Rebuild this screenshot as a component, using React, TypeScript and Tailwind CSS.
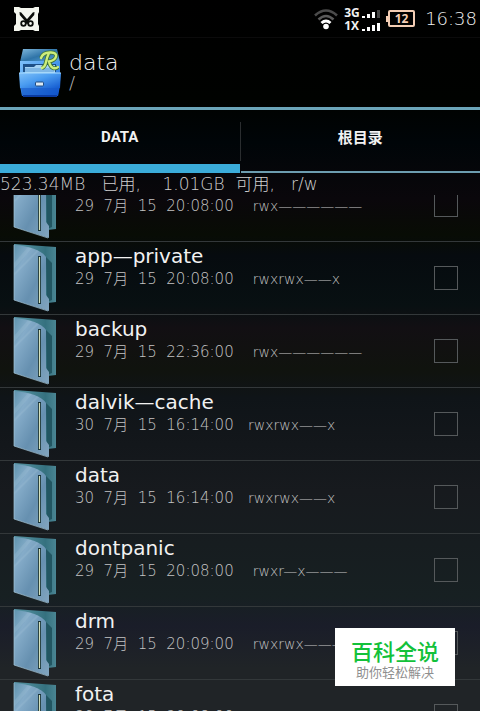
import type { ReactNode } from 'react';

const files = [
  { name: '', date: '29  7月  15  20:08:00    ', perms: 'rwx——————' },
  { name: 'app—private', date: '29  7月  15  20:08:00    ', perms: 'rwxrwx——x' },
  { name: 'backup', date: '29  7月  15  22:36:00    ', perms: 'rwx——————' },
  { name: 'dalvik—cache', date: '30  7月  15  16:14:00   ', perms: 'rwxrwx——x' },
  { name: 'data', date: '30  7月  15  16:14:00   ', perms: 'rwxrwx——x' },
  { name: 'dontpanic', date: '29  7月  15  20:08:00    ', perms: 'rwxr—x———' },
  { name: 'drm', date: '29  7月  15  20:09:00    ', perms: 'rwxrwx———' },
  { name: 'fota', date: '29  7月  15  20:08:00    ', perms: 'rwxrwx——x' },
];

function ScissorsBadge() {
  return (
    <svg className="w-[26px] h-[26px]" viewBox="0 0 26 26" aria-hidden="true">
      <path d="M0 1h5l2 1h12l2-1h4v5l-1 2v10l1 2v5h-4l-2-1H7l-2 1H0v-5l2-2V8L0 6z" fill="#f4f6ee" />
      <path d="M5.500 6q2 0 3 2l7 8-2 2-6-7Q5 9 5.500 6z" fill="#0b0d09" />
      <path d="M20.500 6q-2 0-3 2l-7 8 2 2 6-7q2.500-2 2-5z" fill="#0b0d09" />
      <circle cx="9.500" cy="17.500" r="2.300" fill="none" stroke="#0b0d09" strokeWidth="1.800" />
      <circle cx="16.500" cy="17.500" r="2.300" fill="none" stroke="#0b0d09" strokeWidth="1.800" />
    </svg>
  );
}

function Wifi() {
  return (
    <svg className="w-6 h-[22px]" viewBox="0 0 24 22" fill="none" aria-hidden="true">
      <path d="M1 7.500Q12-2.500 23 7.500" stroke="#4b4b4b" strokeWidth="2.600" />
      <path d="M4.500 11.500Q12 4.500 19.500 11.500" stroke="#5a5a5a" strokeWidth="2.600" />
      <path d="M7.500 15Q12 11 16.500 15" stroke="#fff" strokeWidth="3" />
      <circle cx="12" cy="18.500" r="2.800" fill="#fff" />
    </svg>
  );
}

function SignalRow({ label, last }: { label: string; last: string }) {
  return (
    <div className="flex items-end gap-[2px]">
      <span className="w-4 text-[12px] leading-[13px] font-bold">{label}</span>
      <svg className="w-[18px] h-[11px]" viewBox="0 0 18 11" fill="#fff" aria-hidden="true">
        <path d="M0 8h3v2H0zM5 6h3v4H5zM10 4h3v6h-3z" />
        <path d="M15 2h3v8h-3z" fill={last} />
      </svg>
    </div>
  );
}

function Battery() {
  return (
    <div className="flex items-center text-[#f3cdb4]">
      <span className="w-[2px] h-[6px] bg-[#f3cdb4]" />
      <span className="w-[27px] h-[17px] rounded-xs border-2 border-[#f3cdb4] text-center text-[12px] leading-[13px] font-bold">
        12
      </span>
    </div>
  );
}

function Cabinet() {
  return (
    <svg className="w-[42px] h-[50px] shrink-0" viewBox="0 0 42 50" aria-hidden="true">
      <defs>
        <linearGradient id="cabinetFront" x1="0" y1="0" x2="1" y2="1">
          <stop offset="0" stopColor="#7fc0f8" />
          <stop offset=".45" stopColor="#4a9cf0" />
          <stop offset="1" stopColor="#1158cf" />
        </linearGradient>
        <linearGradient id="cabinetTop" x1="0" y1="0" x2="1" y2="1">
          <stop offset="0" stopColor="#7fb8dc" />
          <stop offset=".5" stopColor="#2f74a8" />
          <stop offset="1" stopColor="#5eaae0" />
        </linearGradient>
      </defs>
      <path d="M4 1h34l3 13H1z" fill="url(#cabinetTop)" />
      <path d="M1 13h40v25l-2 10H3L1 38z" fill="url(#cabinetFront)" />
      <path d="M4 16h33v8H4z" fill="#1d4f86" />
      <path d="M6 19h9l2-2h19v8H6z" fill="#a5d3f4" />
      <path d="M6 21h29M6 23h29" stroke="#5a9bd6" />
      <path d="M0 25h42l-1 15H1z" fill="url(#cabinetFront)" />
      <path d="M0 25h42" stroke="#a8dcff" />
      <path d="M2 40h38l-1 8H3z" fill="#0f50c4" opacity=".6" />
      <path d="M4 48h34" stroke="#0a3aa0" strokeWidth="2" />
      <rect x="16.500" y="34" width="8" height="4" rx="1" fill="#dceaf4" stroke="#214c81" />
      <path
        d="M22 10q2-6 10-5.500 6 .5 5 4-1 4-7 5 1 5 4 6.500 3 1 5-1M30 5q-2 4-3 9-1 5-4 6"
        fill="none"
        stroke="#3f7436"
        strokeWidth="4"
      />
      <path
        d="M22 10q2-6 10-5.500 6 .5 5 4-1 4-7 5 1 5 4 6.500 3 1 5-1M30 5q-2 4-3 9-1 5-4 6"
        fill="none"
        stroke="#cdee7c"
        strokeWidth="2.400"
        strokeLinecap="round"
      />
    </svg>
  );
}

function Folder() {
  return (
    <svg className="w-[50px] h-[70px] shrink-0" viewBox="0 0 50 70" aria-hidden="true">
      <defs>
        <linearGradient id="folderFront" x1="0" y1="0" x2="1" y2="1">
          <stop offset="0" stopColor="#5f93ad" />
          <stop offset=".25" stopColor="#85acc9" />
          <stop offset=".6" stopColor="#6690b0" />
          <stop offset="1" stopColor="#82a5bf" />
        </linearGradient>
        <linearGradient id="folderBack" x1="0" y1="0" x2="1" y2="0">
          <stop offset="0" stopColor="#5b98a8" />
          <stop offset=".75" stopColor="#35717f" />
          <stop offset="1" stopColor="#4a8593" />
        </linearGradient>
      </defs>
      <path d="M1 1l42 3v55l-8 1L1 50z" fill="url(#folderBack)" />
      <path d="M33 14l6 6v37l-5 2z" fill="#225662" />
      <path d="M1 2q25 2 32 12v38l3 4v12L1 57z" fill="url(#folderFront)" />
      <path d="M1 20L15 4l4 1L1 26zM1 30L24 7l2 1L1 33z" fill="#a4c3d6" opacity=".25" />
      <path d="M1 2v55l34 11" fill="none" stroke="#a5c6d7" strokeWidth=".7" />
      <path d="M26.500 13v48" stroke="#183338" strokeWidth="3" />
      <path d="M26.500 14v46" stroke="#d5e1bd" strokeWidth="1.200" />
    </svg>
  );
}

function Tab({ active, children }: { active?: boolean; children: ReactNode }) {
  return (
    <button
      type="button"
      role="tab"
      aria-selected={!!active}
      className={
        active
          ? 'flex-1 border-b-[9px] border-[#3bacd9] text-[15px] font-bold'
          : 'flex-1 border-b-2 border-[#6c9db0] pb-1 text-[15px] font-bold'
      }
    >
      {children}
    </button>
  );
}

export default function App() {
  return (
    <div className="relative flex h-screen flex-col overflow-hidden bg-[linear-gradient(#000_0%,#000200_14%,#000508_20%,#0a070b_28%,#080c05_33%,#060b0f_36%,#081012_43%,#120f13_46%,#10130e_52%,#0f1418_56%,#171a1e_69%,#172022_84%,#1a1d29_88%,#202427_94%,#202427_100%)] font-['DejaVu_Sans_Light','DejaVu_Sans','Noto_Sans_CJK_SC',sans-serif] font-extralight text-[#f2f2f2]">
      <div className="flex h-[38px] shrink-0 items-center justify-between border-b border-[#0b0b0b] pr-[3px] pl-[14px]">
        <ScissorsBadge />
        <div className="flex items-center gap-[6px] font-['Open_Sans',sans-serif]">
          <Wifi />
          <div className="flex flex-col">
            <SignalRow label="3G" last="#444" />
            <SignalRow label="1X" last="#fff" />
          </div>
          <Battery />
          <span className="ml-1 font-['DejaVu_Sans_Light','DejaVu_Sans',sans-serif] text-[18px] leading-6">16:38</span>
        </div>
      </div>

      <header className="flex h-[69px] shrink-0 items-center gap-2 px-[19px]">
        <Cabinet />
        <div className="pb-1">
          <h1 className="text-[22px] leading-6">data</h1>
          <p className="text-[18px] leading-4 text-[#b5b5b5]">/</p>
        </div>
      </header>

      <div role="tablist" className="flex h-[66px] shrink-0 border-t-[3px] border-[#6ba5b9] font-['Roboto','Noto_Sans_CJK_SC',sans-serif]">
        <Tab active>DATA</Tab>
        <span className="mt-3 mb-3 w-px bg-[#2a2d2f]" />
        <Tab>根目录</Tab>
      </div>

      <p className="h-[22px] shrink-0 text-[17px] leading-[22px] whitespace-pre text-[#d0d0d0]">
        523.34MB   已用,    1.01GB  可用,   r/w
      </p>

      <main className="min-h-0 flex-1 overflow-hidden">
        <ul className="-mt-[26px]">
          {files.map((file) => (
            <li key={file.name} className="border-b border-[#33383a]">
              <label className="flex h-[72px] items-center pr-[22px] pl-[13px]">
                <Folder />
                <div className="ml-3 flex-1 self-start pt-[2px]">
                  <div className="h-6 font-['DejaVu_Sans',sans-serif] text-[20px] leading-6 font-normal">{file.name}</div>
                  <div className="flex items-center leading-[22px] whitespace-pre text-[#c4c4c4]">
                    <span className="text-[15px]">{file.date}</span>
                    <span className="text-[14px]">{file.perms}</span>
                  </div>
                </div>
                <input type="checkbox" className="size-6 appearance-none border border-[#55595b]" />
              </label>
            </li>
          ))}
        </ul>
      </main>

      <aside className="absolute right-[25px] bottom-[25px] h-[58px] w-[120px] bg-white pt-[10px] text-center font-['Noto_Sans_CJK_SC',sans-serif]">
        <div className="text-[22px] leading-6 font-medium text-[#13c13a]">百科全说</div>
        <div className="text-[13px] leading-5 font-normal text-[#8f8f8f]">助你轻松解决</div>
      </aside>
    </div>
  );
}
